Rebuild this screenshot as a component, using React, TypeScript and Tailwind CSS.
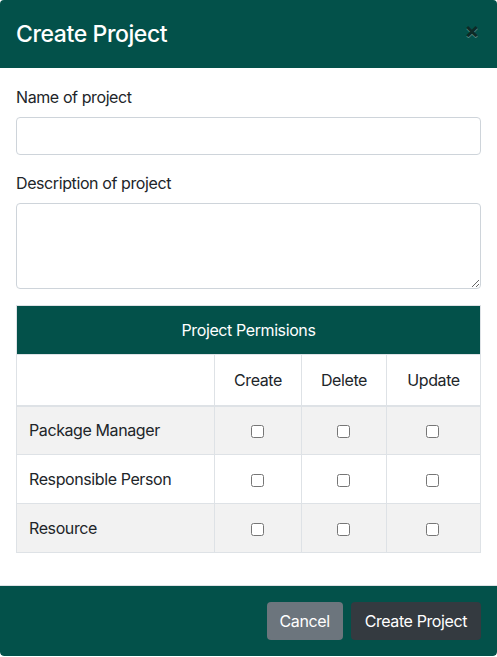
export default function App() {
  const rows = ["Package Manager", "Responsible Person", "Resource"];
  return (
    <div className="min-h-[657px] w-[497px] bg-white font-['Inter',sans-serif] tracking-[-0.025em] text-[#212529]">
      <div className="flex flex-col overflow-hidden rounded-[4px] bg-white">
        <div className="flex h-[68px] items-center justify-between bg-[#03514a] px-4">
          <h5 className="text-[23px] font-medium leading-[36px] text-white">Create Project</h5>
          <button className="-mt-[9px] mr-[2px] text-[22px] font-bold leading-none text-[#0d2a26] [text-shadow:0_1px_0_rgba(255,255,255,0.35)]">
            ×
          </button>
        </div>

        <div className="px-4 pb-4 pt-[17px]">
          <div className="mb-4">
            <label className="mb-2 block text-[16px] leading-6">Name of project</label>
            <input className="block h-[38px] w-full rounded-[4px] border border-[#ced4da] px-3 outline-none" />
          </div>
          <div className="mb-4">
            <label className="mb-2 block text-[16px] leading-6">Description of project</label>
            <textarea rows={3} className="block h-[86px] w-full rounded-[4px] border border-[#ced4da] px-3 py-1.5 outline-none" />
          </div>

          <table className="w-full border-collapse border border-[#dee2e6] text-[16px]">
            <thead>
              <tr>
                <th colSpan={4} className="h-[49px] bg-[#03514a] text-center font-normal text-white">
                  Project Permisions
                </th>
              </tr>
              <tr>
                <th className="h-[51px] w-[198px] border border-b-2 border-[#dee2e6]"></th>
                <th className="w-[87px] border border-b-2 border-[#dee2e6] font-normal">Create</th>
                <th className="w-[85px] border border-b-2 border-[#dee2e6] font-normal">Delete</th>
                <th className="border border-b-2 border-[#dee2e6] font-normal">Update</th>
              </tr>
            </thead>
            <tbody>
              {rows.map((r, i) => (
                <tr key={r} className={i % 2 === 0 ? "bg-[#f2f2f2]" : "bg-white"}>
                  <td className="h-[49px] border border-[#dee2e6] px-3">{r}</td>
                  {[0, 1, 2].map((c) => (
                    <td key={c} className="border border-[#dee2e6] text-center">
                      <input type="checkbox" className="-ml-[2px] align-middle" />
                    </td>
                  ))}
                </tr>
              ))}
            </tbody>
          </table>
        </div>

        <div className="mt-4 flex items-center justify-end gap-2 rounded-b-[4px] border-t border-[#dee2e6] bg-[#03514a] px-4 pb-4 pt-4">
          <button className="h-[38px] rounded-[4px] bg-[#6c757d] px-[13px] text-[16px] text-white">Cancel</button>
          <button className="h-[38px] rounded-[4px] bg-[#343a40] px-[14px] text-[16px] text-white">Create Project</button>
        </div>
      </div>
    </div>
  );
}
